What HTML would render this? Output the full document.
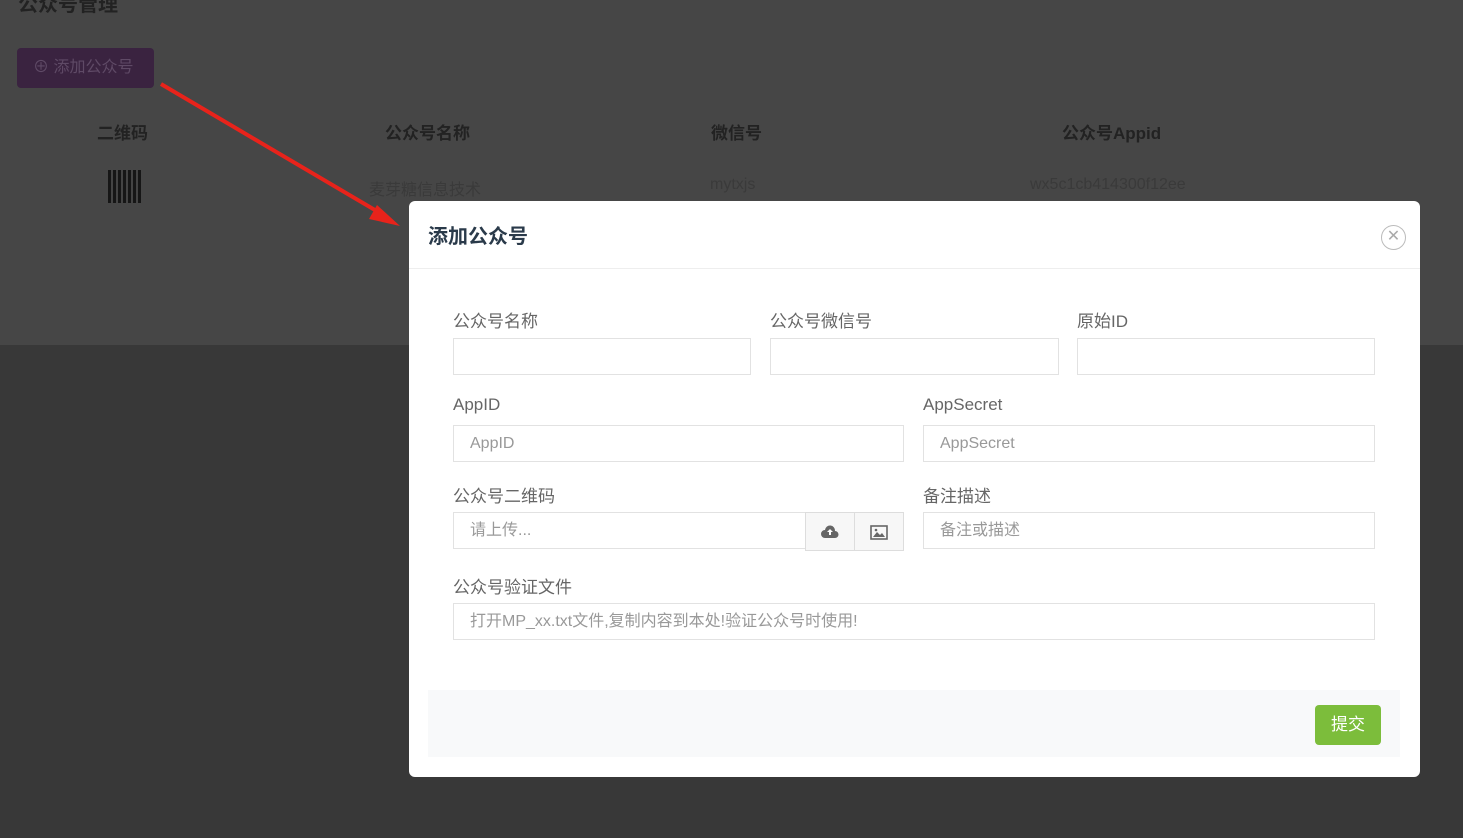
<!DOCTYPE html>
<html><head><meta charset="utf-8"><style>
*{box-sizing:border-box;margin:0;padding:0}
body{width:1463px;height:838px;background:#383838;font-family:"Liberation Sans","Noto Sans CJK SC",sans-serif;position:relative;overflow:hidden}
.top{position:absolute;left:0;top:0;width:1463px;height:345px;background:#464646}
.abs{position:absolute}
.th{font-size:17px;font-weight:bold;color:#222}
.td{font-size:16px;color:#3a3a3a}
.modal{position:absolute;left:409px;top:201px;width:1011px;height:576px;background:#fff;border-radius:6px}
.lbl{position:absolute;font-size:17px;color:#666}
.inp{position:absolute;height:37px;border:1px solid #e2e2e2;background:#fff;font-size:16px;color:#999;padding-left:16px;line-height:35px}
</style></head><body>
<div class="top"></div>
<div class="abs" style="left:18px;top:-12px;font-size:20px;font-weight:bold;color:#222">公众号管理</div>
<div class="abs" style="left:17px;top:48px;width:137px;height:40px;background:#3a2340;border-radius:4px;color:#5f4a66;font-size:16px;line-height:40px;padding-left:16px">⊕ 添加公众号</div>
<div class="abs th" style="left:97px;top:119px">二维码</div>
<div class="abs th" style="left:385px;top:119px">公众号名称</div>
<div class="abs th" style="left:711px;top:119px">微信号</div>
<div class="abs th" style="left:1062px;top:119px">公众号Appid</div>
<div class="abs" style="left:108px;top:170px;width:33px;height:33px;background:repeating-linear-gradient(90deg,#111 0 3px,#444 3px 5px),#111;opacity:.9"></div>
<div class="abs td" style="left:369px;top:176px">麦芽糖信息技术</div>
<div class="abs td" style="left:710px;top:176px">mytxjs</div>
<div class="abs td" style="left:1030px;top:176px">wx5c1cb414300f12ee</div>
<svg class="abs" style="left:0;top:0" width="420" height="240"><line x1="161" y1="84" x2="385" y2="216" stroke="#e8231b" stroke-width="4"/><polygon points="400,226 377,205 369,219" fill="#e8231b"/></svg>
<div class="modal">
<div class="abs" style="left:19px;top:19px;font-size:20px;font-weight:bold;color:#2a3a4a">添加公众号</div>
<div class="abs" style="left:972px;top:24px;width:25px;height:25px;border:1.5px solid #bbb;border-radius:50%;color:#aaa;text-align:center;line-height:21px;font-size:16px">✕</div>
<div class="abs" style="left:0;top:67px;width:1011px;border-top:1px solid #eee"></div>
<div class="lbl" style="left:44px;top:106px">公众号名称</div>
<div class="lbl" style="left:361px;top:106px">公众号微信号</div>
<div class="lbl" style="left:668px;top:106px">原始ID</div>
<div class="inp" style="left:44px;top:137px;width:298px"></div>
<div class="inp" style="left:361px;top:137px;width:289px"></div>
<div class="inp" style="left:668px;top:137px;width:298px"></div>
<div class="lbl" style="left:44px;top:194px">AppID</div>
<div class="lbl" style="left:514px;top:194px">AppSecret</div>
<div class="inp" style="left:44px;top:224px;width:451px">AppID</div>
<div class="inp" style="left:514px;top:224px;width:452px">AppSecret</div>
<div class="lbl" style="left:44px;top:281px">公众号二维码</div>
<div class="lbl" style="left:514px;top:281px">备注描述</div>
<div class="inp" style="left:44px;top:311px;width:353px">请上传...</div>
<div class="inp" style="left:396px;top:311px;width:50px;height:39px;background:#f7f7f7;border-color:#ddd;padding:0;text-align:center"><svg width="18" height="14" viewBox="0 0 18 14" style="margin-top:12px"><path d="M4 13a4 4 0 0 1 0-8 5 5 0 0 1 10 1 3.5 3.5 0 0 1 0 7z" fill="#666"/><path d="M9 4l-3 3h2v3h2V7h2z" fill="#fff"/></svg></div>
<div class="inp" style="left:445px;top:311px;width:50px;height:39px;background:#f7f7f7;border-color:#ddd;padding:0;text-align:center"><svg width="18" height="15" viewBox="0 0 18 15" style="margin-top:12px"><rect x="1" y="1" width="16" height="13" fill="none" stroke="#666" stroke-width="1.6"/><path d="M3 12l4-5 3 3 2-2 3 4z" fill="#666"/><circle cx="6" cy="5" r="1.3" fill="#666"/></svg></div>
<div class="inp" style="left:514px;top:311px;width:452px">备注或描述</div>
<div class="lbl" style="left:44px;top:372px">公众号验证文件</div>
<div class="inp" style="left:44px;top:402px;width:922px">打开MP_xx.txt文件,复制内容到本处!验证公众号时使用!</div>
<div class="abs" style="left:19px;top:489px;width:972px;height:67px;background:#f8f9fa"></div>
<div class="abs" style="left:906px;top:504px;width:66px;height:40px;background:#7cbd3b;border-radius:4px;color:#fff;font-size:17px;text-align:center;line-height:40px">提交</div>
</div>
</body></html>
